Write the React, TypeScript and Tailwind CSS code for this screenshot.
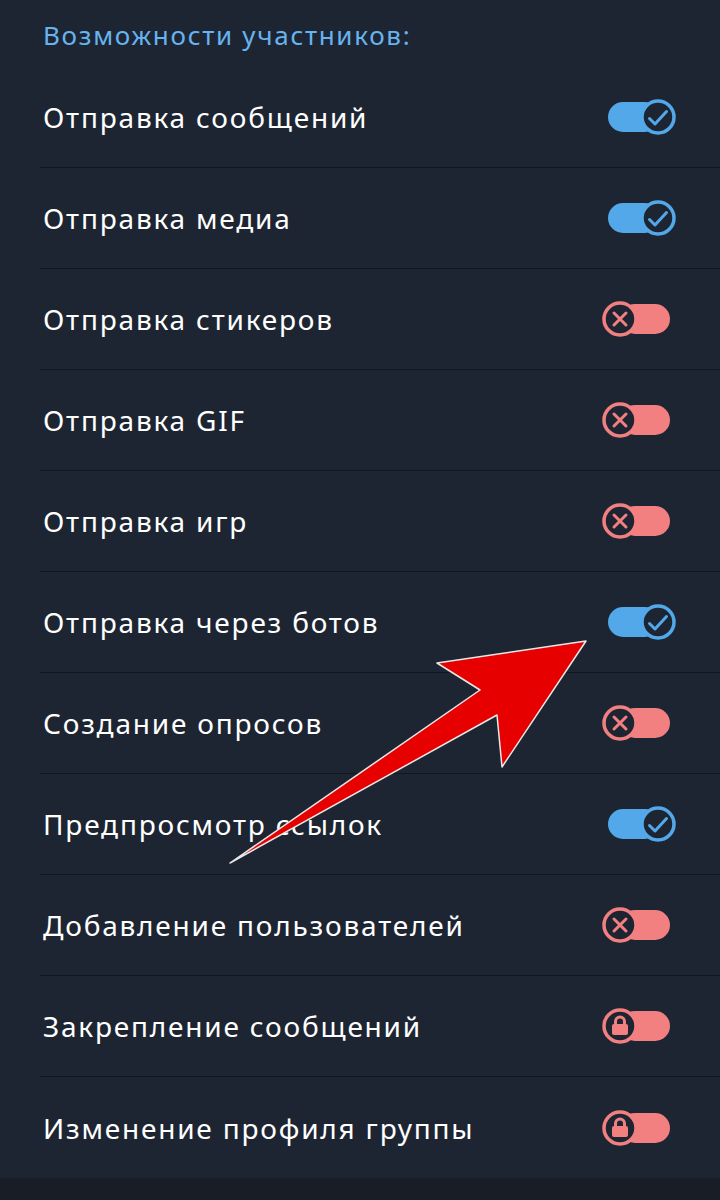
const permissions: { label: string; state: "on" | "off" | "locked" }[] = [
  { label: "Отправка сообщений", state: "on" },
  { label: "Отправка медиа", state: "on" },
  { label: "Отправка стикеров", state: "off" },
  { label: "Отправка GIF", state: "off" },
  { label: "Отправка игр", state: "off" },
  { label: "Отправка через ботов", state: "on" },
  { label: "Создание опросов", state: "off" },
  { label: "Предпросмотр ссылок", state: "on" },
  { label: "Добавление пользователей", state: "off" },
  { label: "Закрепление сообщений", state: "locked" },
  { label: "Изменение профиля группы", state: "locked" },
];

const BG = "#1e2532";
const BLUE = "#52a8e8";
const RED = "#f28080";

function Toggle({ state }: { state: "on" | "off" | "locked" }) {
  if (state === "on") {
    return (
      <svg width="76" height="40" viewBox="0 0 76 40" className="shrink-0">
        <rect x="8" y="5" width="52" height="30" rx="15" fill={BLUE} />
        <circle cx="58" cy="20" r="16" fill={BG} stroke={BLUE} strokeWidth="3.5" />
        <path d="M49.5 21.5 L55 27 L66.5 14.5" fill="none" stroke={BLUE} strokeWidth="3" strokeLinecap="round" strokeLinejoin="round" />
      </svg>
    );
  }
  return (
    <svg width="76" height="40" viewBox="0 0 76 40" className="shrink-0">
      <rect x="20" y="5" width="50" height="30" rx="15" fill={RED} />
      <circle cx="20" cy="20" r="16" fill={BG} stroke={RED} strokeWidth="3.5" />
      {state === "off" ? (
        <path d="M14 14 L26 26 M26 14 L14 26" stroke={RED} strokeWidth="3" strokeLinecap="round" />
      ) : (
        <g>
          <path d="M15.5 19 V15.5 a4.5 4.5 0 0 1 9 0 V19" fill="none" stroke={RED} strokeWidth="3" />
          <rect x="12" y="18" width="16" height="11" rx="2" fill={RED} />
        </g>
      )}
    </svg>
  );
}

function Arrow() {
  return (
    <svg className="absolute left-0 top-0 pointer-events-none" width="720" height="1200" viewBox="0 0 720 1200">
      <path
        d="M230 863 L480 690 L437 663 L586 641 L502 767 L497 715 Z"
        fill="#e60000"
        stroke="#e8e8e8"
        strokeWidth="1.5"
        strokeLinejoin="round"
      />
    </svg>
  );
}

export default function App() {
  return (
    <div
      className="relative w-[720px] h-[1200px] overflow-hidden flex flex-col bg-[#1e2532]"
      style={{ fontFamily: '"Noto Sans", "Open Sans", sans-serif' }}
    >
      <div className="h-[67px] pl-[43px] pt-[17px] text-[26px] leading-[36px] tracking-[1.7px] text-[#66b3f0]">
        Возможности участников:
      </div>
      <div className="flex flex-col">
        {permissions.map((p, i) => (
          <div
            key={p.label}
            className={`ml-10 h-[101px] flex items-center justify-between pr-[44px] ${
              i < permissions.length - 1 ? "border-b border-[#121720]" : ""
            }`}
          >
            <span className="pl-[3px] text-[28px] text-white tracking-[1.8px]">{p.label}</span>
            <Toggle state={p.state} />
          </div>
        ))}
      </div>
      <div className="flex-1 bg-[#181d26]" />
      <Arrow />
    </div>
  );
}
